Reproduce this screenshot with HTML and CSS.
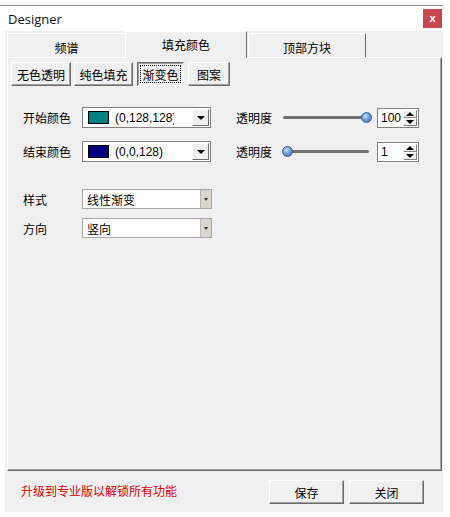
FILE: index.html
```html
<!DOCTYPE html>
<html>
<head>
<meta charset="utf-8">
<link rel="stylesheet" href="styles.css">
</head>
<body>
<div class="frame">
  <div class="topline"></div>
  <div class="titlebar">
    <span class="title">Designer</span>
    <span class="close">x</span>
  </div>
  <div class="win">
    <div class="tabs">
      <div class="tab t1">频谱</div>
      <div class="tab active">填充颜色</div>
      <div class="tab t3">顶部方块</div>
    </div>
    <div class="panel">
      <div class="subtabs">
        <div class="btn sub w60">无色透明</div>
        <div class="btn sub w59">纯色填充</div>
        <div class="btn sub pressed w47"><span class="focus">渐变色</span></div>
        <div class="btn sub w42">图案</div>
      </div>
      <div class="grid">
        <span class="lbl">开始颜色</span>
        <div class="ccombo">
          <span class="swatch teal"></span>
          <span class="ctext">(0,128,128)</span>
          <span class="drop"><i class="tri"></i></span>
        </div>
        <span class="lbl">透明度</span>
        <div class="slider"><div class="track"></div><div class="thumb" style="left:78px"></div></div>
        <div class="spin"><span class="val">100</span><span class="spinbtns"><span class="sb"><i class="up"></i></span><span class="sb"><i class="dn"></i></span></span></div>

        <span class="lbl">结束颜色</span>
        <div class="ccombo">
          <span class="swatch navy"></span>
          <span class="ctext">(0,0,128)</span>
          <span class="drop"><i class="tri"></i></span>
        </div>
        <span class="lbl">透明度</span>
        <div class="slider"><div class="track"></div><div class="thumb" style="left:-1px"></div></div>
        <div class="spin"><span class="val">1</span><span class="spinbtns"><span class="sb"><i class="up"></i></span><span class="sb"><i class="dn"></i></span></span></div>
      </div>
      <div class="grid2">
        <span class="lbl">样式</span>
        <div class="scombo"><span class="stext">线性渐变</span><span class="sdrop"><i class="stri"></i></span></div>
        <span class="lbl">方向</span>
        <div class="scombo"><span class="stext">竖向</span><span class="sdrop"><i class="stri"></i></span></div>
      </div>
    </div>
    <div class="footer">
      <span class="promo">升级到专业版以解锁所有功能</span>
      <div class="actions">
        <div class="btn big">保存</div>
        <div class="btn big">关闭</div>
      </div>
    </div>
  </div>
</div>
</body>
</html>
```

FILE: styles.css
```css
* { box-sizing: border-box; }
html, body { margin: 0; padding: 0; background: #fff; }
body {
  font-family: "Liberation Sans", "Noto Sans CJK SC", sans-serif;
  font-size: 12px;
  color: #000;
}
.frame { width: 443px; padding-top: 5px; }
.topline { height: 1px; background: #8c8c8c; }
.titlebar {
  height: 25px;
  display: flex;
  align-items: center;
  justify-content: space-between;
  padding-left: 8px;
  background: #fff;
}
.title { font-family: "Open Sans", "Liberation Sans", sans-serif; font-size: 13px; color: #111; }
.close {
  width: 19px; height: 19px;
  margin-right: 1px;
  background: #c8474c;
  color: #fff;
  font-size: 11px;
  font-weight: bold;
  display: flex; align-items: center; justify-content: center;
  line-height: 1;
}
.win {
  margin-left: 5px;
  width: 438px;
  height: 481px;
  background: #f0f0f0;
  padding-left: 2px;
  display: flex;
  flex-direction: column;
}
.tabs { height: 26px; display: flex; align-items: flex-end; position: relative; z-index: 2; }
.tab {
  height: 24px;
  width: 118px;
  display: flex; align-items: center; justify-content: center;
  padding-top: 3px;
  background: #f0f0f0;
  border-top: 1px solid #fff;
  border-left: 1px solid #fff;
  border-right: 1px solid #6a6a6a;
  font-size: 12px;
}
.tab.t1 { border-right: none; }
.tab.active {
  width: 122px;
  height: 27px;
  margin-bottom: -1px;
  padding-top: 0;
  padding-bottom: 2px;
  border-right: 1px solid #6a6a6a;
}
.tab.t3 { margin-left: 1px; }
.panel {
  width: 435px;
  height: 414px;
  border-top: 1px solid #fff;
  border-left: 1px solid #fff;
  border-right: 1px solid #6a6a6a;
  border-bottom: 1px solid #6a6a6a;
  box-shadow: inset -1px -1px 0 #a0a0a0;
  position: relative;
  z-index: 1;
}
.subtabs { display: flex; gap: 3px; margin: 4px 0 0 3px; }
.subtabs .w47 { margin-left: 1px; }
.subtabs .w42 { margin-left: 1px; }
.btn {
  height: 24px;
  display: flex; align-items: center; justify-content: center;
  background: #f0f0f0;
  border: 1px solid;
  border-color: #fff #6a6a6a #6a6a6a #fff;
  box-shadow: inset -1px -1px 0 #a0a0a0;
  font-size: 12px;
}
.w60 { width: 60px; } .w59 { width: 59px; } .w47 { width: 47px; } .w42 { width: 42px; }
.btn.pressed {
  border-color: #6a6a6a #fff #fff #6a6a6a;
  box-shadow: inset 1px 1px 0 #a0a0a0;
  padding: 2px;
}
.focus {
  display: flex; align-items: center; justify-content: center;
  width: 100%; height: 100%;
  border: 1px dotted #000;
  padding-top: 1px;
}
.grid {
  display: grid;
  grid-template-columns: 59px 129px 72px 88px 42px;
  row-gap: 13px;
  grid-auto-rows: 21px;
  margin: 21px 0 0 15px;
  align-items: center;
}
.grid .lbl:nth-child(5n+3) { margin-left: 25px; }
.lbl { font-size: 12px; white-space: nowrap; }
.ccombo {
  height: 21px;
  display: flex; align-items: center;
  background: #fff;
  border: 1px solid #7f7f7f;
  padding-left: 5px;
}
.swatch { width: 21px; height: 13px; border: 1px solid #000; flex: none; }
.teal { background: #008080; }
.navy { background: #000080; }
.ctext { width: 59px; overflow: hidden; white-space: nowrap; margin-left: 6px; font-family: "Liberation Sans", sans-serif; font-size: 12px; }
.drop {
  margin-left: auto;
  width: 17px; height: 17px;
  margin-right: 1px;
  background: #f0f0f0;
  border: 1px solid;
  border-color: #fff #6a6a6a #6a6a6a #fff;
  display: flex; align-items: center; justify-content: center;
}
.tri { width: 0; height: 0; border-left: 4px solid transparent; border-right: 4px solid transparent; border-top: 4px solid #000; }
.slider { position: relative; height: 21px; }
.track {
  position: absolute; left: 0; right: 2px; top: 9px;
  height: 3px; border-radius: 2px;
  background: #707070;
}
.thumb {
  position: absolute; top: 5px;
  width: 11px; height: 11px; border-radius: 50%;
  background: radial-gradient(circle at 40% 35%, #cfe3ff 0%, #6f9de6 45%, #2e63c2 100%);
  border: 1px solid #3a5f9e;
}
.spin {
  margin-left: 6px;
  width: 42px; height: 20px;
  background: #fff;
  border: 1px solid #7f7f7f;
  display: flex; align-items: stretch;
}
.val { flex: 1; padding-left: 3px; font-size: 12px; display: flex; align-items: center; font-family: "Liberation Sans", sans-serif; }
.spinbtns { width: 15px; display: flex; flex-direction: column; padding: 1px 1px 1px 0; }
.sb {
  flex: 1;
  background: #f0f0f0;
  border: 1px solid; border-color: #fff #808080 #808080 #fff;
  display: flex; align-items: center; justify-content: center;
}
.up { width: 0; height: 0; border-left: 4px solid transparent; border-right: 4px solid transparent; border-bottom: 4px solid #000; }
.dn { width: 0; height: 0; border-left: 4px solid transparent; border-right: 4px solid transparent; border-top: 4px solid #000; }
.grid2 {
  display: grid;
  grid-template-columns: 59px 130px;
  grid-auto-rows: 20px;
  row-gap: 9px;
  margin: 27px 0 0 15px;
  align-items: center;
}
.scombo {
  height: 20px;
  display: flex; align-items: stretch;
  background: #fff;
  border: 1px solid #a7a7a7;
}
.stext { flex: 1; padding-left: 4px; font-size: 12px; display: flex; align-items: center; }
.sdrop {
  width: 11px;
  background: #d9d5cd;
  border-left: 1px solid #bdb9b1;
  display: flex; align-items: center; justify-content: center;
}
.stri { width: 0; height: 0; border-left: 2px solid transparent; border-right: 2px solid transparent; border-top: 3px solid #333; }
.footer {
  flex: 1;
  display: flex;
  justify-content: space-between;
  align-items: flex-start;
  padding: 9px 19px 0 14px;
}
.promo { color: #e00000; font-size: 12px; line-height: 24px; }
.actions { display: flex; gap: 5px; }
.btn.big { width: 75px; }
```
